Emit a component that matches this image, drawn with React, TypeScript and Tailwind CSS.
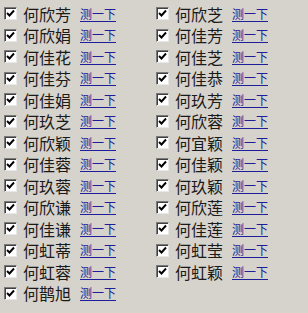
import React from 'react';

const LEFT = [
  '何欣芳', '何欣娟', '何佳花', '何佳芬', '何佳娟', '何玖芝', '何欣颖',
  '何佳蓉', '何玖蓉', '何欣谦', '何佳谦', '何虹蒂', '何虹蓉', '何鹊旭',
];

const RIGHT = [
  '何欣芝', '何佳芳', '何佳芝', '何佳恭', '何玖芳', '何欣蓉', '何宜颖',
  '何佳颖', '何玖颖', '何欣莲', '何佳莲', '何虹莹', '何虹颖',
];

function CheckBox() {
  return (
    <span className="flex h-[13px] w-[13px] shrink-0 items-center justify-center border border-t-[#7a7a7a] border-l-[#7a7a7a] border-r-[#e8e8e8] border-b-[#e8e8e8] bg-white shadow-[inset_1px_1px_0_#404040]">
      <svg width="9" height="9" viewBox="0 0 9 9">
        <path d="M1 4 L3.5 6.5 L8 1.5" fill="none" stroke="#000" strokeWidth="1.9" />
      </svg>
    </span>
  );
}

function Row({ name }: { name: string }) {
  return (
    <div className="flex h-[21.5px] items-center">
      <div className="ml-[4px]">
        <CheckBox />
      </div>
      <span className="ml-[6px] w-[50px] text-[16px] leading-[20px] text-[#1a1a1a] [font-family:'Noto_Sans_CJK_SC',sans-serif]">
        {name}
      </span>
      <a className="ml-[7px] text-[12px] leading-[16px] text-[#1e1e9a] underline underline-offset-2 [font-family:'Noto_Sans_CJK_SC',sans-serif]">
        测一下
      </a>
    </div>
  );
}

export default function App() {
  return (
    <div className="h-[313px] w-[308px] overflow-hidden bg-[#d6d3cc] pt-[3px]">
      <div className="flex">
        <div className="flex w-[152px] flex-col">
          {LEFT.map((n) => (
            <Row key={n} name={n} />
          ))}
        </div>
        <div className="flex flex-col">
          {RIGHT.map((n) => (
            <Row key={n} name={n} />
          ))}
        </div>
      </div>
    </div>
  );
}
